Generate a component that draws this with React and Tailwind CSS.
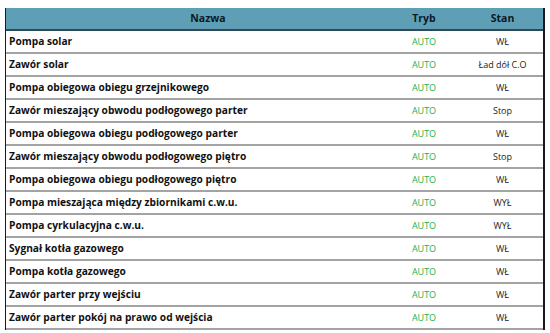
import React from "react";

const rows = [
  ["Pompa solar", "AUTO", "WŁ"],
  ["Zawór solar", "AUTO", "Ład dół C.O"],
  ["Pompa obiegowa obiegu grzejnikowego", "AUTO", "WŁ"],
  ["Zawór mieszający obwodu podłogowego parter", "AUTO", "Stop"],
  ["Pompa obiegowa obiegu podłogowego parter", "AUTO", "WŁ"],
  ["Zawór mieszający obwodu podłogowego piętro", "AUTO", "Stop"],
  ["Pompa obiegowa obiegu podłogowego piętro", "AUTO", "WŁ"],
  ["Pompa mieszająca między zbiornikami c.w.u.", "AUTO", "WYŁ"],
  ["Pompa cyrkulacyjna c.w.u.", "AUTO", "WYŁ"],
  ["Sygnał kotła gazowego", "AUTO", "WŁ"],
  ["Pompa kotła gazowego", "AUTO", "WŁ"],
  ["Zawór parter przy wejściu", "AUTO", "WŁ"],
  ["Zawór parter pokój na prawo od wejścia", "AUTO", "WŁ"],
];

const App = () => {
  return (
    <div
      className="w-[550px] h-[333px] overflow-hidden bg-white pt-[8px] pl-[5px]"
      style={{ fontFamily: '"Open Sans", "Noto Sans", sans-serif' }}
    >
      <div className="w-[540px] border-l border-r-2 border-[#1a1a1a]">
        {/* header */}
        <div className="flex h-[23px] items-center bg-[#5f9fb5] border-b-2 border-[#2f4a55] text-[10.5px] font-bold text-[#0b1a24]">
          <div className="w-[380px] pl-[24px] text-center">Nazwa</div>
          <div className="w-[76px] text-center">Tryb</div>
          <div className="flex-1 text-center">Stan</div>
        </div>

        {rows.map((r, i) => (
          <div
            key={i}
            className="flex h-[23px] items-center border-b-2 border-[#a3a3a3]"
          >
            <div className="w-[380px] pl-[3px] text-[10.2px] font-bold text-[#111]">
              {r[0]}
            </div>
            <div className="w-[76px] text-center text-[9px] text-[#22b14c]">
              {r[1]}
            </div>
            <div className="flex-1 text-center text-[9px] text-[#222]">
              {r[2]}
            </div>
          </div>
        ))}
      </div>
    </div>
  );
};

export default App;
